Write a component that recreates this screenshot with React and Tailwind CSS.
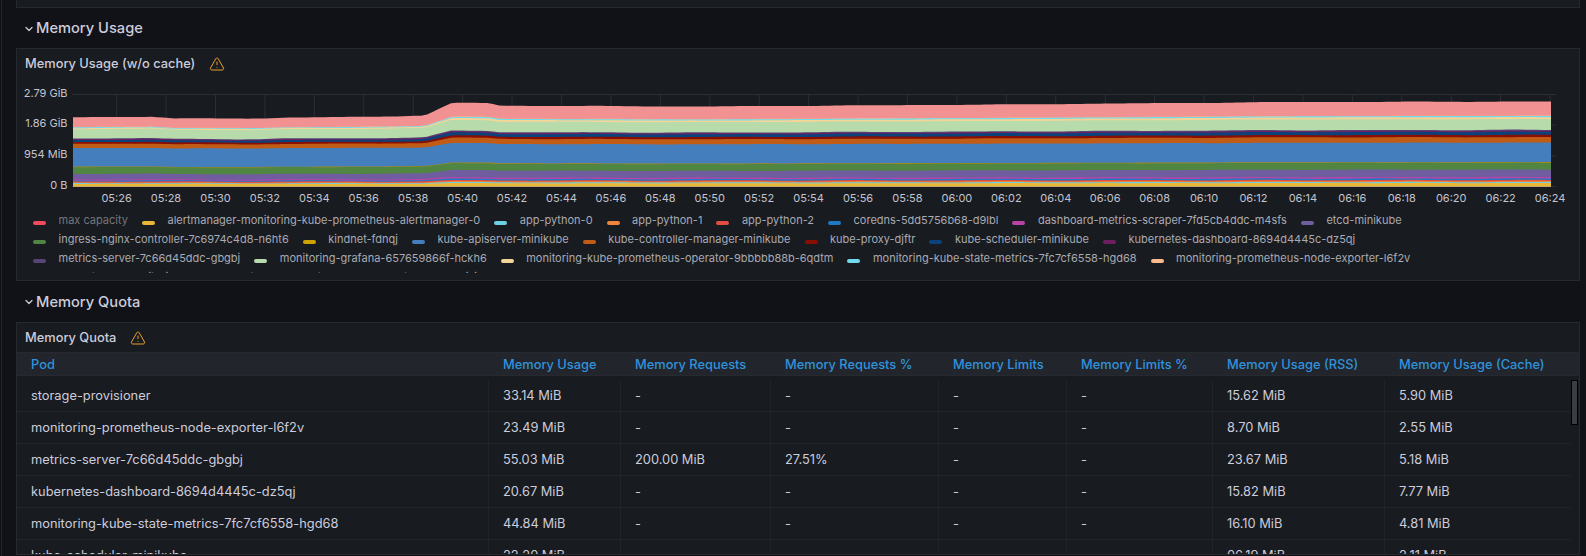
import { ChevronDown, TriangleAlert } from 'lucide-react';

// stack from the bottom up: colour, height (px) before the bump, height at the right edge
const bands = [
  ['#EAB839', 2.5, 3.5],
  ['#6ED0E0', 0.7, 1],
  ['#EF843C', 0.8, 1],
  ['#E24D42', 1, 1],
  ['#1F78C1', 1, 1.5],
  ['#BA43A9', 1, 1.5],
  ['#705DA0', 5.5, 7.5],
  ['#508642', 6.7, 6.8],
  ['#A88A10', 0.5, 0.7],
  ['#447EBC', 18.5, 19.5],
  ['#C15C17', 4.2, 5.5],
  ['#890F02', 1.8, 2.3],
  ['#0A437C', 2, 3],
  ['#6D1F62', 0.8, 1],
  ['#584477', 0.7, 1],
  ['#B7DBAB', 9.3, 10.8],
  ['#F4D598', 1, 2],
  ['#70DBED', 0.7, 1.2],
  ['#F9BA8F', 0.3, 0.3],
  ['#F29191', 9.5, 14.2],
];

const topProfile = [
  [73, 117.4], [110, 117], [152, 116.6], [175, 118.5], [260, 118.5], [285, 117.5], [360, 117],
  [425, 115.5], [452, 102.8], [488, 103], [500, 105.7], [700, 106.5], [1000, 104.5], [1300, 102], [1551, 101.5],
];

const BASE = 186.5;
const sumLeft = bands.reduce((s, b) => s + b[1], 0);
const sumRight = bands.reduce((s, b) => s + b[2], 0);

const topAt = (x) => {
  for (let i = 1; i < topProfile.length; i++) {
    const [x0, y0] = topProfile[i - 1];
    const [x1, y1] = topProfile[i];
    if (x <= x1) return y0 + ((y1 - y0) * (x - x0)) / (x1 - x0);
  }
  return 101.5;
};

const xs = [];
for (let x = 73; x <= 1551; x += 6) xs.push(x);
xs.push(1551);

const bandPaths = () => {
  const cum = xs.map(() => BASE);
  return bands.map((b, idx) => {
    const pts = xs.map((x, i) => {
      const t = (BASE - topAt(x) - sumLeft) / (sumRight - sumLeft);
      const wobble = Math.sin(i * 0.37 + idx * 1.7) * Math.sin(i * 0.09 + idx) * 0.18;
      cum[i] -= b[1] + (b[2] - b[1]) * t + wobble;
      return `${x} ${cum[i].toFixed(2)}`;
    });
    return { color: b[0], d: `M73 ${BASE}L${pts.join('L')}L1551 ${BASE}Z` };
  });
};

const stack = bandPaths().reverse();

const yLabels = [
  ['2.79 GiB', 94.5],
  ['1.86 GiB', 125],
  ['954 MiB', 156],
  ['0 B', 186.5],
];

const ticks = Array.from({ length: 30 }, (_, i) => {
  const total = 5 * 60 + 26 + i * 2;
  const h = String(Math.floor(total / 60)).padStart(2, '0');
  const m = String(total % 60).padStart(2, '0');
  return { label: `${h}:${m}`, x: 116.6 + 49.43 * i };
});

const legend = [
  ['#F2495C', 'max capacity'],
  ['#EAB839', 'alertmanager-monitoring-kube-prometheus-alertmanager-0'],
  ['#6ED0E0', 'app-python-0'],
  ['#EF843C', 'app-python-1'],
  ['#E24D42', 'app-python-2'],
  ['#1F78C1', 'coredns-5dd5756b68-d9lbl'],
  ['#BA43A9', 'dashboard-metrics-scraper-7fd5cb4ddc-m4sfs'],
  ['#705DA0', 'etcd-minikube'],
  ['#508642', 'ingress-nginx-controller-7c6974c4d8-n6ht6'],
  ['#CCA300', 'kindnet-fdnqj'],
  ['#447EBC', 'kube-apiserver-minikube'],
  ['#C15C17', 'kube-controller-manager-minikube'],
  ['#890F02', 'kube-proxy-djftr'],
  ['#0A437C', 'kube-scheduler-minikube'],
  ['#6D1F62', 'kubernetes-dashboard-8694d4445c-dz5qj'],
  ['#584477', 'metrics-server-7c66d45ddc-gbgbj'],
  ['#B7DBAB', 'monitoring-grafana-657659866f-hckh6'],
  ['#F4D598', 'monitoring-kube-prometheus-operator-9bbbbb88b-6qdtm'],
  ['#70DBED', 'monitoring-kube-state-metrics-7fc7cf6558-hgd68'],
  ['#F9BA8F', 'monitoring-prometheus-node-exporter-l6f2v'],
  ['#F29191', 'prometheus-monitoring-kube-prometheus-prometheus-0'],
  ['#E5AC0E', 'storage-provisioner'],
];

const columns = [
  'Pod',
  'Memory Usage',
  'Memory Requests',
  'Memory Requests %',
  'Memory Limits',
  'Memory Limits %',
  'Memory Usage (RSS)',
  'Memory Usage (Cache)',
];

const rows = [
  ['storage-provisioner', '33.14 MiB', '-', '-', '-', '-', '15.62 MiB', '5.90 MiB'],
  ['monitoring-prometheus-node-exporter-l6f2v', '23.49 MiB', '-', '-', '-', '-', '8.70 MiB', '2.55 MiB'],
  ['metrics-server-7c66d45ddc-gbgbj', '55.03 MiB', '200.00 MiB', '27.51%', '-', '-', '23.67 MiB', '5.18 MiB'],
  ['kubernetes-dashboard-8694d4445c-dz5qj', '20.67 MiB', '-', '-', '-', '-', '15.82 MiB', '7.77 MiB'],
  ['monitoring-kube-state-metrics-7fc7cf6558-hgd68', '44.84 MiB', '-', '-', '-', '-', '16.10 MiB', '4.81 MiB'],
  ['kube-scheduler-minikube', '22.20 MiB', '-', '-', '-', '-', '06.19 MiB', '2.11 MiB'],
];

const SectionHeader = ({ title, className }) => (
  <div className={`flex items-center ${className}`}>
    <ChevronDown size={12} strokeWidth={2.5} className="ml-[7px] mr-[1px] mt-[1px] text-[#ccccdc]" />
    <span className="text-[14.67px] font-medium text-[#ccccdc]">{title}</span>
  </div>
);

const PanelTitle = ({ title, className }) => (
  <div className={`flex items-center pl-2 ${className}`}>
    <span className="text-[12.83px] font-medium text-[#ccccdc]">{title}</span>
    <TriangleAlert size={16} strokeWidth={1.5} className="ml-[14px] text-[#e8a02f]" />
  </div>
);

const Chart = () => (
  <svg width="1562" height="130" viewBox="17 78 1562 130" className="block shrink-0">
    {yLabels.map(([, y]) => (
      <line key={y} x1="72" x2="1556" y1={y} y2={y} stroke="#2b2e34" />
    ))}
    {ticks.map((t) => (
      <line key={t.label} x1={t.x} x2={t.x} y1="94.5" y2="186.5" stroke="#2b2e34" />
    ))}
    {stack.map((s) => (
      <path key={s.color} d={s.d} fill={s.color} />
    ))}
    <g fill="#c4c4d0" fontSize="11">
      {yLabels.map(([label, y]) => (
        <text key={label} x="67.5" y={y + 2} textAnchor="end">{label}</text>
      ))}
      {ticks.map((t) => (
        <text key={t.label} x={t.x} y="201.5" textAnchor="middle">{t.label}</text>
      ))}
    </g>
  </svg>
);

const Legend = () => (
  <div className="h-[62px] mt-[3px] overflow-hidden pl-4 pr-[14px] flex flex-wrap content-start gap-x-[14px]">
    {legend.map(([color, name], i) => (
      <div key={name} className="flex items-center h-[19px] text-[11px]">
        <i className="block w-[13px] h-[4px] rounded-sm mt-[4px] mr-[12.5px]" style={{ backgroundColor: color }} />
        <span className={i === 0 ? 'text-[#75767d]' : 'text-[#a9aab3]'}>{name}</span>
      </div>
    ))}
  </div>
);

const gridCols = 'grid grid-cols-[472px_132px_150px_168px_128px_146px_172px_186px]';

const QuotaTable = () => (
  <div className="relative flex-1 min-h-0 overflow-hidden">
    <div className={`${gridCols} h-[24px] w-[1562px] items-center bg-[#22252b] border-y border-[#26292e] text-[12.83px] font-medium text-[#2f93dc]`}>
      {columns.map((c) => (
        <div key={c} className="pl-[14px] pt-[2px] truncate">{c}</div>
      ))}
    </div>
    <div className="mt-[4px]">
      {rows.map((row) => (
        <div key={row[0]} className={`${gridCols} h-[32px] w-[1554px] border-b border-[#22252a] text-[12.83px] text-[#ccccdc]`}>
          {row.map((cell, i) => (
            <div key={i} className={`pl-[14px] flex items-center ${i < 7 ? 'border-r border-[#202328]' : ''}`}>{cell}</div>
          ))}
        </div>
      ))}
    </div>
    <div className="absolute right-[1px] top-[28px] w-[7px] h-[45px] bg-[#3b3d44] border border-black" />
  </div>
);

const App = () => (
  <div className="h-[556px] w-[1586px] overflow-hidden flex bg-[#111217] [font-family:Inter,sans-serif]">
    <div className="w-[2px] border-r border-[#22252b] shrink-0" />
    <div className="w-[1564px] ml-[14px] flex flex-col">
      <div className="h-[8px] shrink-0 bg-[#181b1f] border border-t-0 border-[#26292e]" />
      <SectionHeader title="Memory Usage" className="h-[40px] shrink-0" />
      <div className="h-[233px] shrink-0 flex flex-col bg-[#181b1f] border border-[#26292e]">
        <PanelTitle title="Memory Usage (w/o cache)" className="h-[29px] shrink-0" />
        <Chart />
        <Legend />
      </div>
      <SectionHeader title="Memory Quota" className="h-[41px] shrink-0" />
      <div className="h-[233px] shrink-0 flex flex-col bg-[#181b1f] border border-[#26292e]">
        <PanelTitle title="Memory Quota" className="h-[29px] shrink-0" />
        <QuotaTable />
      </div>
    </div>
  </div>
);

export default App;
